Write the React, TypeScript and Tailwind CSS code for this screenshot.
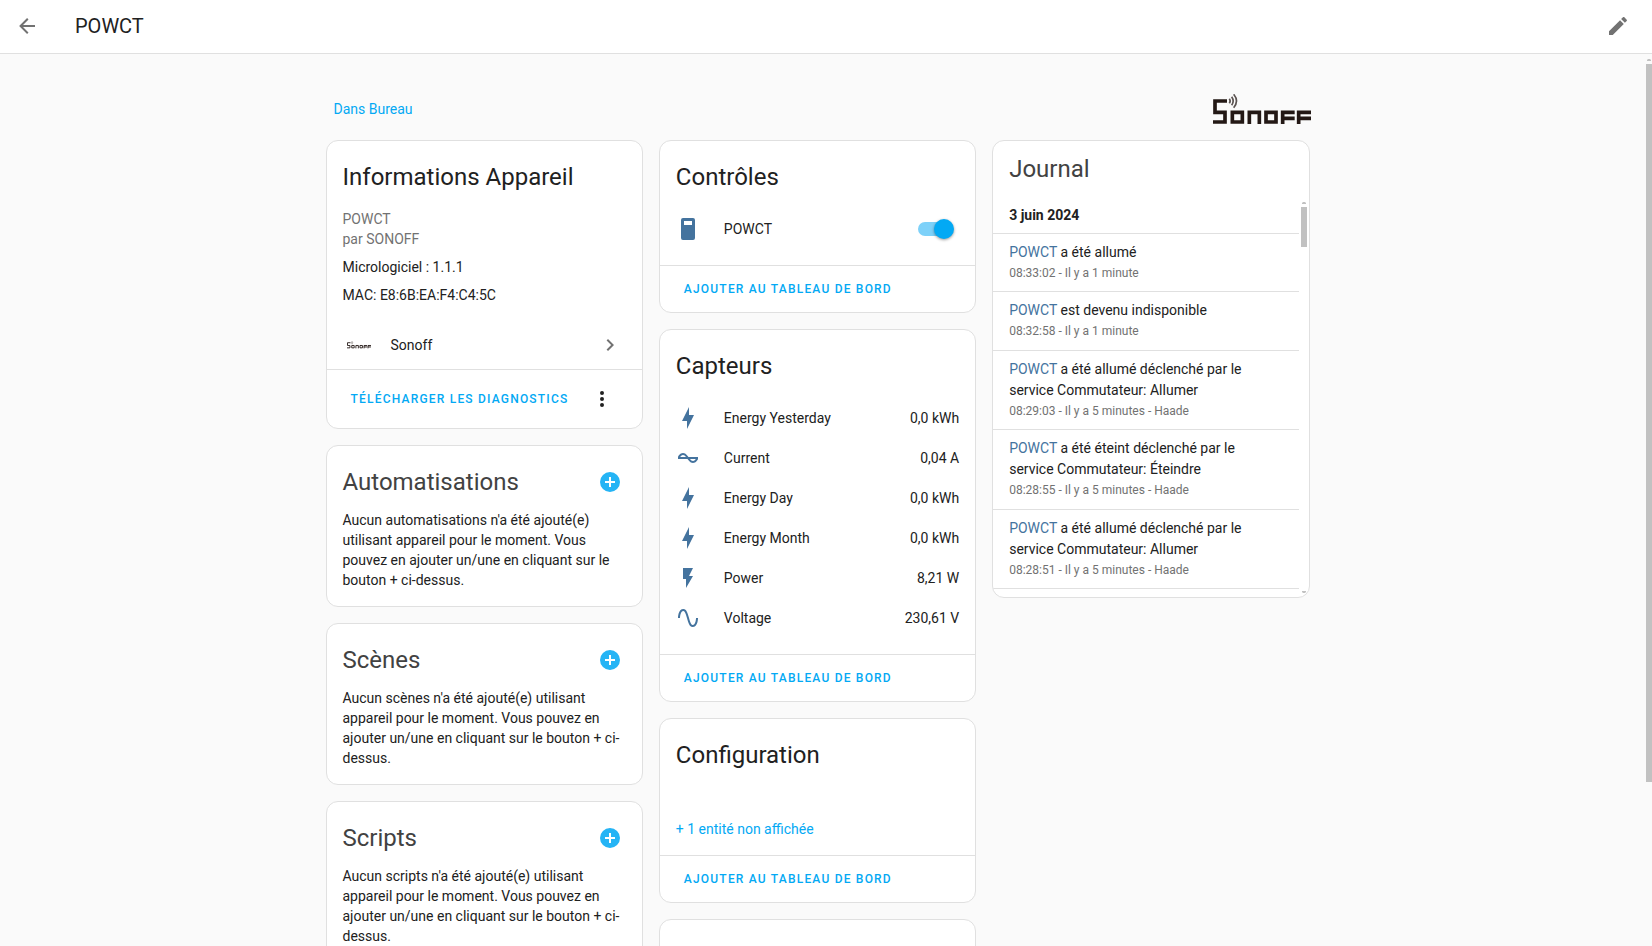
import type { ReactNode } from "react";

const paths = {
  back: "M20,11V13H8L13.5,18.5L12.08,19.92L4.16,12L12.08,4.08L13.5,5.5L8,11H20Z",
  pencil:
    "M20.71,7.04C21.1,6.65 21.1,6 20.71,5.63L18.37,3.29C18,2.9 17.35,2.9 16.96,3.29L15.12,5.12L18.87,8.87M3,17.25V21H6.75L17.81,9.93L14.06,6.18L3,17.25Z",
  plus: "M17,13H13V17H11V13H7V11H11V7H13V11H17M12,2A10,10 0 0,0 2,12A10,10 0 0,0 12,22A10,10 0 0,0 22,12A10,10 0 0,0 12,2Z",
  bolt: "M11 15H6L13 1V9H18L11 23V15Z",
  flash: "M7,2V13H10V22L17,10H13L17,2H7Z",
  sine: "M16.5,21C13.5,21 12.31,16.76 11.05,12.28C10.14,9.04 9,5 7.5,5C4.11,5 4,11.93 4,12H2C2,11.63 2.06,3 7.5,3C10.5,3 11.71,7.25 12.97,11.74C13.83,14.8 15,19 16.5,19C19.94,19 20.03,12.07 20.03,12H22.03C22.03,12.37 21.97,21 16.5,21Z",
  current:
    "M12.43 11C12.28 10.84 10 7 7 7S2.32 10.18 2 11V13H11.57C11.72 13.16 14 17 17 17S21.68 13.82 22 13V11H12.43M7 9C8.17 9 9.18 9.85 10 11H4.31C4.78 10.17 5.54 9 7 9M17 15C15.83 15 14.82 14.15 14 13H19.69C19.22 13.83 18.46 15 17 15Z",
  chevron: "M8.59,16.58L13.17,12L8.59,7.41L10,6L16,12L10,18L8.59,16.58Z",
  dots: "M12,16A2,2 0 0,1 14,18A2,2 0 0,1 12,20A2,2 0 0,1 10,18A2,2 0 0,1 12,16M12,10A2,2 0 0,1 14,12A2,2 0 0,1 12,14A2,2 0 0,1 10,12A2,2 0 0,1 12,10M12,4A2,2 0 0,1 14,6A2,2 0 0,1 12,8A2,2 0 0,1 10,6A2,2 0 0,1 12,4Z",
  relay:
    "M7,1H17A2,2 0 0,1 19,3V21A2,2 0 0,1 17,23H7A2,2 0 0,1 5,21V3A2,2 0 0,1 7,1M8,4V8H16V4H8Z",
};

type IconName = keyof typeof paths;

function Icon({ name, className = "" }: { name: IconName; className?: string }) {
  return (
    <svg viewBox="0 0 24 24" aria-hidden="true" className={`size-6 shrink-0 fill-current ${className}`}>
      <path fillRule="evenodd" d={paths[name]} />
    </svg>
  );
}

function SonoffLogo({ className }: { className: string }) {
  return (
    <svg viewBox="0 0 294 90" role="img" aria-label="Sonoff" className={className}>
      <g fill="none" stroke="#231815" strokeWidth="11">
        <path d="M42 21H6V55H36V84H0" />
        <path d="M58 55H88V84H58Z" />
        <path d="M109 90V55H139V90" />
        <path d="M159 55H189V84H159Z" />
        <path d="M245 55H209V90M209 73H245" />
        <path d="M294 55H257V90M257 73H294" />
      </g>
      <g fill="none" stroke="#5a5250" strokeWidth="5">
        <path d="M49 14Q54 21 49 28" />
        <path d="M56 8Q65 21 56 34" />
        <path d="M62 1Q79 21 62 41" />
      </g>
    </svg>
  );
}

function Card({ children }: { children?: ReactNode }) {
  return <section className="rounded-xl border border-[#e0e0e0] bg-white">{children}</section>;
}

function Title({ children }: { children: ReactNode }) {
  return <h2 className="px-4 pt-3 text-2xl leading-[48px]">{children}</h2>;
}

function TextButton({ children }: { children: ReactNode }) {
  return (
    <button type="button" className="h-9 px-2 text-xs font-medium tracking-widest text-[#03a9f4] uppercase">
      {children}
    </button>
  );
}

function Actions({ children }: { children: ReactNode }) {
  return (
    <div className="flex items-center justify-between border-t border-[#e0e0e0] px-4 py-[5px]">{children}</div>
  );
}

function RelatedCard({ title, text }: { title: string; text: string }) {
  return (
    <Card>
      <div className="flex items-center justify-between pt-3 pr-2 pl-4">
        <h2 className="text-2xl leading-[48px] text-[#424242]">{title}</h2>
        <button type="button" aria-label={`Ajouter ${title}`} className="flex size-12 items-center justify-center text-[#25b4f5]">
          <Icon name="plus" />
        </button>
      </div>
      <p className="px-4 pt-1 pb-4">{text}</p>
    </Card>
  );
}

const sensors: { icon: IconName; name: string; value: string }[] = [
  { icon: "bolt", name: "Energy Yesterday", value: "0,0 kWh" },
  { icon: "current", name: "Current", value: "0,04 A" },
  { icon: "bolt", name: "Energy Day", value: "0,0 kWh" },
  { icon: "bolt", name: "Energy Month", value: "0,0 kWh" },
  { icon: "flash", name: "Power", value: "8,21 W" },
  { icon: "sine", name: "Voltage", value: "230,61 V" },
];

const journal = [
  { text: "a été allumé", time: "08:33:02 - Il y a 1 minute" },
  { text: "est devenu indisponible", time: "08:32:58 - Il y a 1 minute" },
  { text: "a été allumé déclenché par le service Commutateur: Allumer", time: "08:29:03 - Il y a 5 minutes - Haade" },
  { text: "a été éteint déclenché par le service Commutateur: Éteindre", time: "08:28:55 - Il y a 5 minutes - Haade" },
  { text: "a été allumé déclenché par le service Commutateur: Allumer", time: "08:28:51 - Il y a 5 minutes - Haade" },
];

function ScrollArrow({ down = false }: { down?: boolean }) {
  return (
    <svg viewBox="0 0 6 10" aria-hidden="true" className="h-[10px] w-[6px] shrink-0">
      <path fill="#c1c1c1" d={down ? "M1 4H5V5L4 6H2L1 5Z" : "M1 7V6L2 5H4L5 6V7Z"} />
    </svg>
  );
}

export default function App() {
  return (
    <div className="flex h-screen flex-col bg-[#fafafa] font-['Roboto',sans-serif] text-sm text-[#212121]">
      <header className="flex shrink-0 items-center border-b border-[#e0e0e0] bg-white pt-[2px] pr-[10px] pb-[3px] pl-[3px]">
        <button type="button" aria-label="Retour" className="flex size-12 items-center justify-center text-[#727272]">
          <Icon name="back" />
        </button>
        <h1 className="flex-1 pl-6 text-xl leading-[48px]">POWCT</h1>
        <button type="button" aria-label="Modifier" className="flex size-12 items-center justify-center text-[#727272]">
          <Icon name="pencil" />
        </button>
      </header>

      <div className="flex min-h-0 flex-1">
        <main className="min-w-0 flex-1 overflow-y-auto [scrollbar-width:none]">
          <div className="mx-auto max-w-[1000px] px-2 pt-10">
            <div className="flex items-start justify-between pb-4 pl-2">
              <a href="#bureau" className="pt-[5px] text-[#03a9f4]">
                Dans Bureau
              </a>
              <SonoffLogo className="-mr-px h-[30px] w-[98px]" />
            </div>

            <div className="grid grid-cols-3 items-start gap-4">
              <div className="flex flex-col gap-4">
                <Card>
                  <Title>Informations Appareil</Title>
                  <div className="px-4 pt-2 pb-4">
                    <div className="text-[#727272]">POWCT</div>
                    <div className="text-[#727272]">par SONOFF</div>
                    <div className="pt-2">Micrologiciel : 1.1.1</div>
                    <div className="pt-2">MAC: E8:6B:EA:F4:C4:5C</div>
                  </div>
                  <a href="#sonoff" className="flex h-12 items-center gap-5 px-5">
                    <SonoffLogo className="w-6" />
                    <span className="flex-1">Sonoff</span>
                    <Icon name="chevron" className="text-[#727272]" />
                  </a>
                  <Actions>
                    <TextButton>Télécharger les diagnostics</TextButton>
                    <button type="button" aria-label="Menu" className="flex size-12 items-center justify-center">
                      <Icon name="dots" />
                    </button>
                  </Actions>
                </Card>
                <RelatedCard
                  title="Automatisations"
                  text="Aucun automatisations n'a été ajouté(e) utilisant appareil pour le moment. Vous pouvez en ajouter un/une en cliquant sur le bouton + ci-dessus."
                />
                <RelatedCard
                  title="Scènes"
                  text="Aucun scènes n'a été ajouté(e) utilisant appareil pour le moment. Vous pouvez en ajouter un/une en cliquant sur le bouton + ci-dessus."
                />
                <RelatedCard
                  title="Scripts"
                  text="Aucun scripts n'a été ajouté(e) utilisant appareil pour le moment. Vous pouvez en ajouter un/une en cliquant sur le bouton + ci-dessus."
                />
              </div>

              <div className="flex flex-col gap-4">
                <Card>
                  <Title>Contrôles</Title>
                  <div className="px-4 pt-2 pb-4">
                    <label className="flex h-10 items-center gap-6">
                      <Icon name="relay" className="text-[#44739e]" />
                      <span className="flex-1">POWCT</span>
                      <span className="relative mr-[5px] flex h-5 w-9 items-center">
                        <input type="checkbox" role="switch" defaultChecked className="peer sr-only" />
                        <span className="h-[14px] w-8 rounded-full bg-[#bdbdbd] peer-checked:bg-[#7dd1f9]" />
                        <span className="absolute top-0 left-0 size-5 rounded-full bg-white shadow-[0_1px_3px_rgba(0,0,0,0.4)] peer-checked:right-0 peer-checked:left-auto peer-checked:bg-[#03a9f4]" />
                      </span>
                    </label>
                  </div>
                  <Actions>
                    <TextButton>Ajouter au tableau de bord</TextButton>
                  </Actions>
                </Card>

                <Card>
                  <Title>Capteurs</Title>
                  <ul className="px-4 pt-2 pb-4">
                    {sensors.map((s) => (
                      <li key={s.name} className="flex h-10 items-center gap-6">
                        <Icon name={s.icon} className="text-[#44739e]" />
                        <span className="flex-1">{s.name}</span>
                        <span>{s.value}</span>
                      </li>
                    ))}
                  </ul>
                  <Actions>
                    <TextButton>Ajouter au tableau de bord</TextButton>
                  </Actions>
                </Card>

                <Card>
                  <Title>Configuration</Title>
                  <div className="px-4 pt-10 pb-4">
                    <button type="button" className="block text-[#03a9f4]">
                      + 1 entité non affichée
                    </button>
                  </div>
                  <Actions>
                    <TextButton>Ajouter au tableau de bord</TextButton>
                  </Actions>
                </Card>

                <Card>
                  <div className="h-40" />
                </Card>
              </div>

              <section className="overflow-hidden rounded-xl border border-[#e0e0e0] bg-white">
                <h2 className="px-4 py-1 text-2xl leading-[48px] text-[#424242]">Journal</h2>
                <div className="flex h-[400px]">
                  <div className="min-w-0 flex-1 overflow-y-auto [scrollbar-width:none]">
                    <h3 className="px-4 py-2 font-bold">3 juin 2024</h3>
                    <ul className="divide-y divide-[#e0e0e0] border-y border-[#e0e0e0]">
                      {journal.map((e) => (
                        <li key={e.time} className="px-4 py-2">
                          <div className="leading-[21px]">
                            <a href="#powct" className="text-[#44739e]">
                              POWCT
                            </a>{" "}
                            {e.text}
                          </div>
                          <div className="text-xs leading-[1.7] text-[#727272]">{e.time}</div>
                        </li>
                      ))}
                    </ul>
                  </div>
                  <div className="flex w-[10px] flex-col items-center" aria-hidden="true">
                    <ScrollArrow />
                    <div className="h-10 w-[6px] bg-[#c1c1c1]" />
                    <div className="flex-1" />
                    <ScrollArrow down />
                  </div>
                </div>
              </section>
            </div>
          </div>
        </main>
        <div className="flex w-[17px] flex-col items-end" aria-hidden="true">
          <ScrollArrow />
          <div className="h-[calc(80%+4px)] w-[6px] bg-[#c1c1c1]" />
        </div>
      </div>
    </div>
  );
}
